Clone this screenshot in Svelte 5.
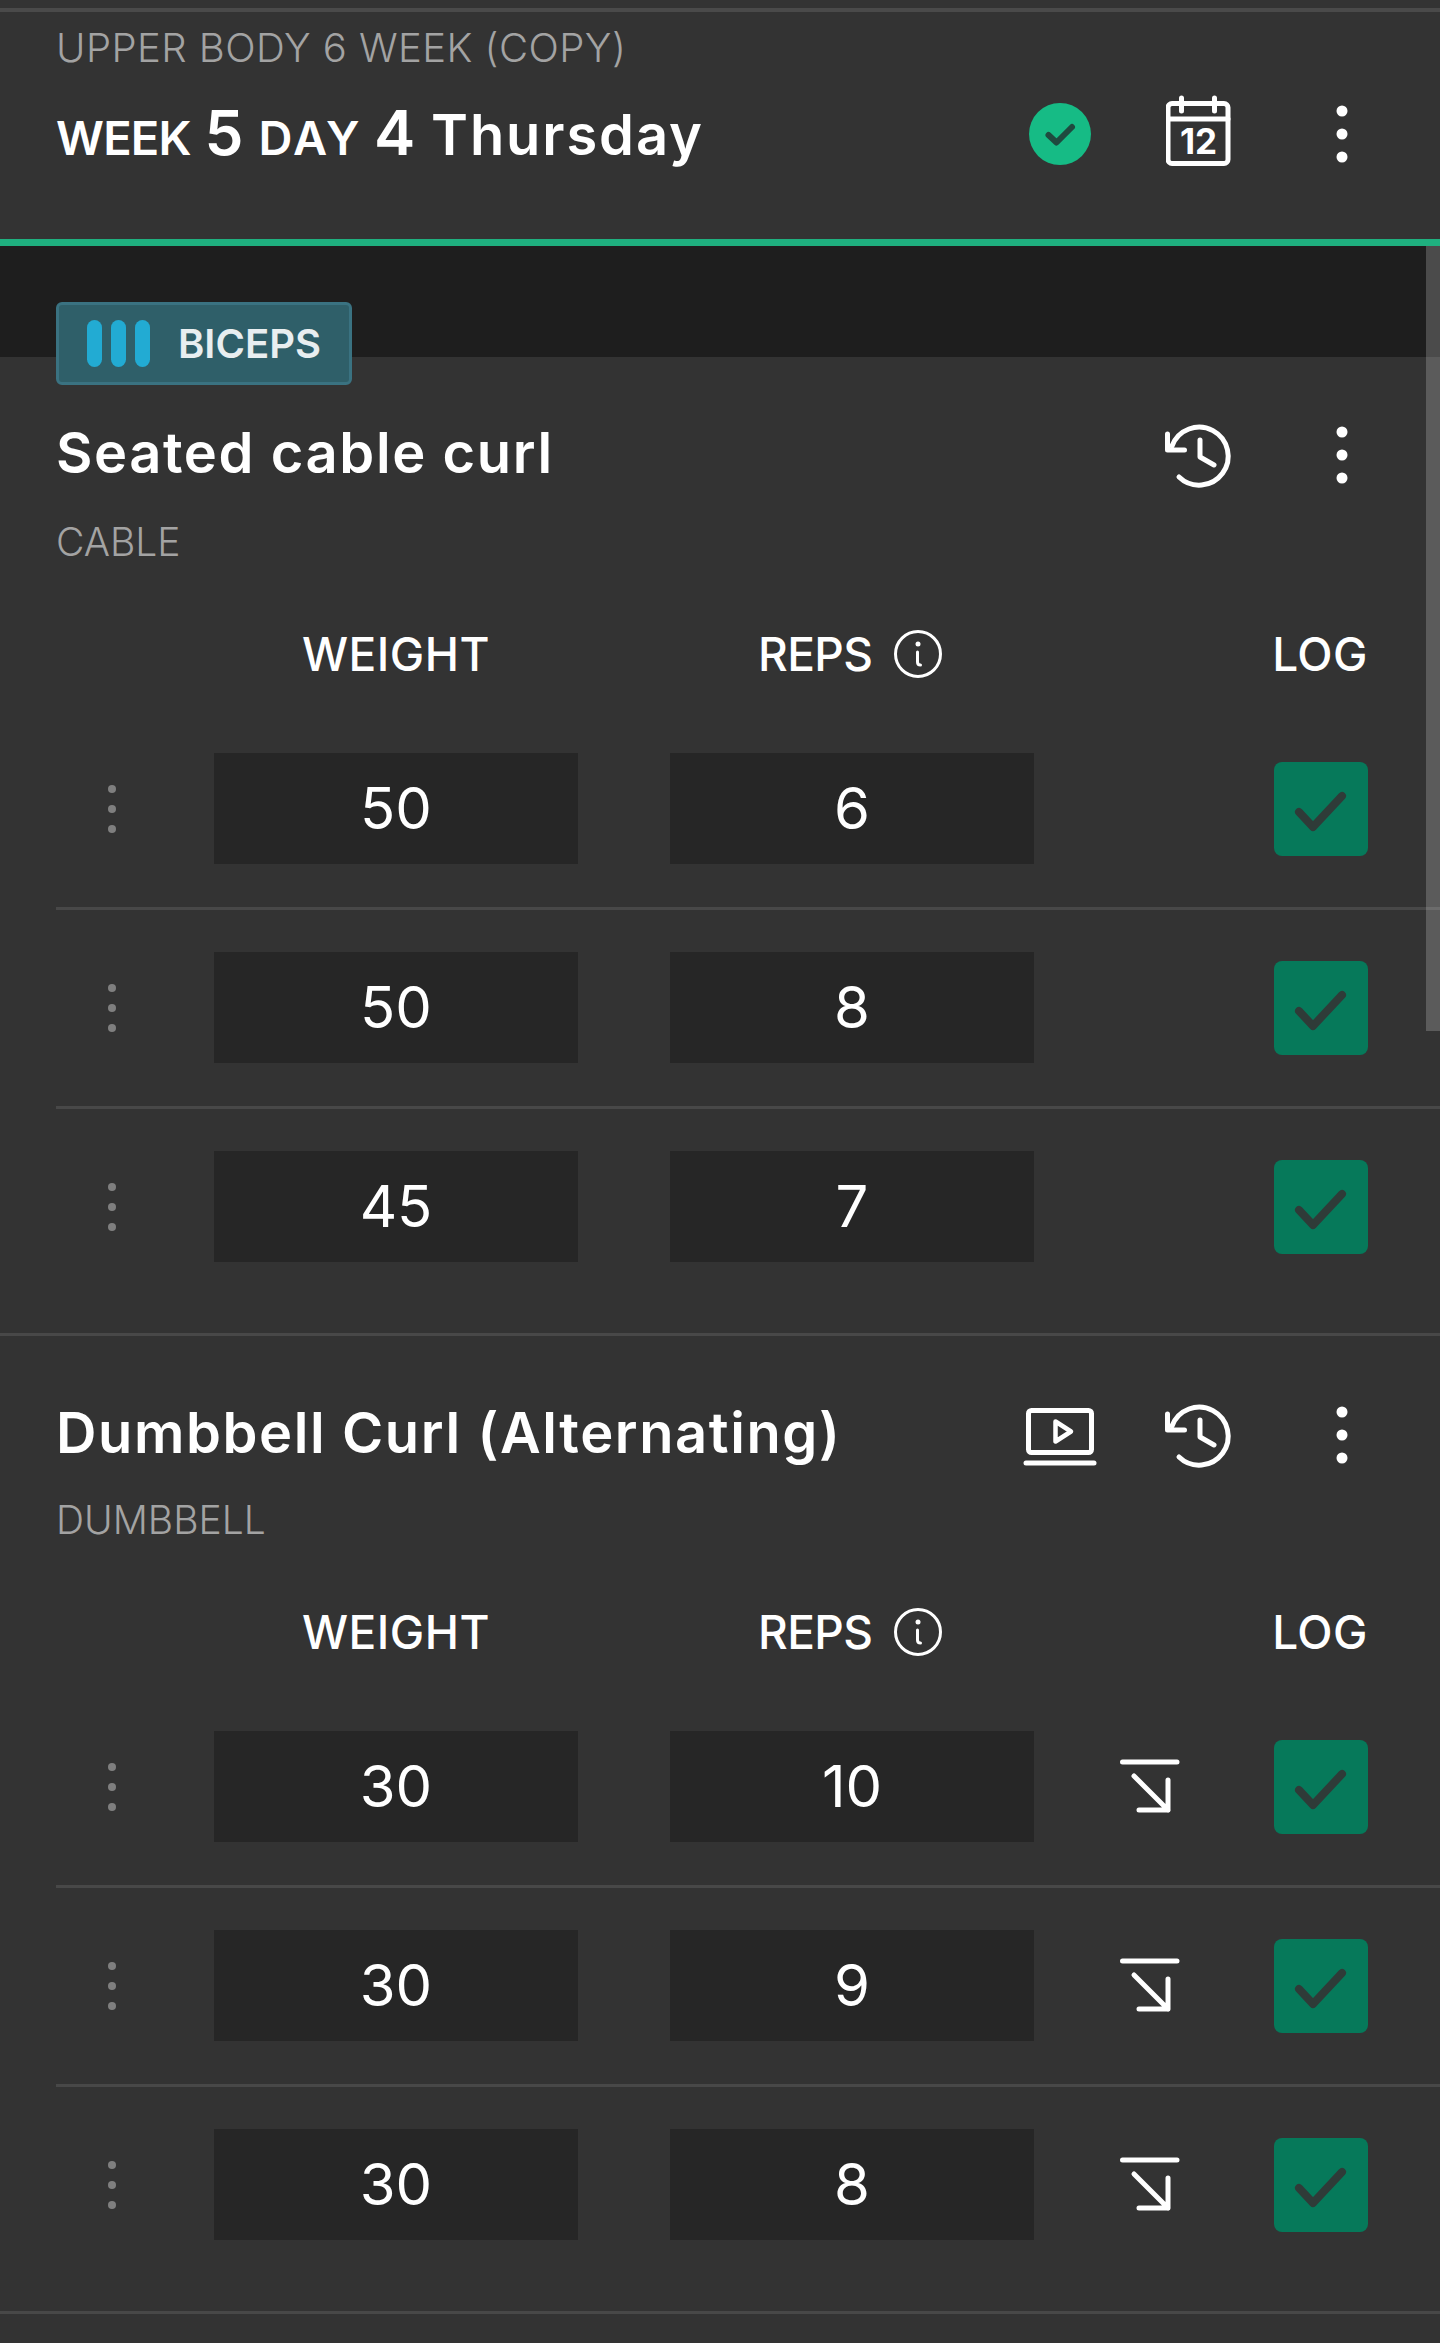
<script lang="ts">
  const exercises = [
    {
      name: 'Seated cable curl',
      kind: 'CABLE',
      video: false,
      rows: [
        { weight: 50, reps: 6, drop: false },
        { weight: 50, reps: 8, drop: false },
        { weight: 45, reps: 7, drop: false },
      ],
    },
    {
      name: 'Dumbbell Curl (Alternating)',
      kind: 'DUMBBELL',
      video: true,
      rows: [
        { weight: 30, reps: 10, drop: true },
        { weight: 30, reps: 9, drop: true },
        { weight: 30, reps: 8, drop: true },
      ],
    },
  ];
</script>

{#snippet kebab()}
  <svg class="icon" width="22" height="68" viewBox="0 0 22 68" aria-hidden="true">
    <circle cx="11" cy="11" r="5.5" /><circle cx="11" cy="34" r="5.5" /><circle cx="11" cy="57" r="5.5" />
  </svg>
{/snippet}

<div class="page">
  <header class="head">
    <p class="program">UPPER BODY 6 WEEK (COPY)</p>
    <div class="title-row">
      <h1 class="day"><span class="week">WEEK</span> <b>5</b> <span class="dayw">DAY</span> <b>4</b> <em>Thursday</em></h1>
      <div class="actions">
        <div class="cell">
          <svg width="62" height="62" viewBox="0 0 62 62" aria-hidden="true">
            <circle class="done" cx="31" cy="31" r="31" />
            <path class="done-tick" d="M19.5 32 L27.5 39.5 L43 24" />
          </svg>
        </div>
        <div class="cell">
          <svg class="line" width="70" height="80" viewBox="0 0 70 80" aria-hidden="true">
            <rect x="2" y="9.500" width="60" height="60" rx="4" />
            <path d="M2 25 H62 M15.500 4 V17 M48.500 4 V17" />
            <text class="cal-num" x="32.500" y="60">12</text>
          </svg>
        </div>
        <div class="cell">{@render kebab()}</div>
      </div>
    </div>
  </header>

  <div class="band">
    <div class="badge">
      <span class="bars"><i></i><i></i><i></i></span>
      BICEPS
    </div>
  </div>

  {#each exercises as ex, i}
    <section class="exercise" class:first={i === 0}>
      <div class="title-row ex-title">
        <h2>{ex.name}</h2>
        <div class="actions">
          <div class="cell">
            {#if ex.video}
              <svg class="line" width="78" height="66" viewBox="0 0 78 66" aria-hidden="true">
                <rect x="7.500" y="8.500" width="63" height="42" rx="3" />
                <path d="M5 61 H73" />
                <path class="thin" d="M34.500 19.500 L50 29.500 L34.500 39.500 Z" />
              </svg>
            {/if}
          </div>
          <div class="cell">
            <svg class="line" width="78" height="70" viewBox="0 -2 78 70" aria-hidden="true">
              <path d="M5.500 12 V28 H22.500" />
              <path d="M10 24 A29 29 0 1 1 17 55" />
              <path d="M38 18 V35 L52 43" />
            </svg>
          </div>
          <div class="cell">{@render kebab()}</div>
        </div>
      </div>
      <p class="kind">{ex.kind}</p>

      <div class="labels">
        <span class="label">WEIGHT</span>
        <span class="label reps-label">
          REPS
          <svg class="info" width="50" height="50" viewBox="0 0 50 50" aria-hidden="true">
            <circle cx="25" cy="25" r="22.500" />
            <circle class="info-dot" cx="25" cy="15" r="2.500" />
            <path d="M24.500 23 V33 Q24.500 36 27.500 36" />
          </svg>
        </span>
        <span class="label log-label">LOG</span>
      </div>

      {#each ex.rows as row}
        <div class="row">
          <div class="handle"><i></i><i></i><i></i></div>
          <div class="field">{row.weight}</div>
          <div class="field">{row.reps}</div>
          {#if row.drop}
            <svg class="line drop" width="60" height="60" viewBox="0 0 60 60" aria-hidden="true">
              <path d="M2.500 5 H57 M14 19 L48 53 M48 23 V53 H19" />
            </svg>
          {/if}
          <div class="log">
            <svg width="94" height="94" viewBox="0 0 94 94" aria-hidden="true">
              <path d="M25 50 L39 65 L68 34" />
            </svg>
          </div>
        </div>
      {/each}
    </section>
  {/each}

  <div class="scrollbar"></div>
</div>

<style>
  :global(body) { margin: 0; background: #333; }
  .page {
    position: relative; height: 2343px; background: #333; color: #fff; padding-top: 8px; box-sizing: border-box;
    font-family: Inter, "Liberation Sans", sans-serif; overflow: hidden;
  }
  p, h1, h2 { margin: 0; font-weight: normal; }

  .head { border-top: 4px solid #4a4a4a; border-bottom: 7px solid #1fb07f; padding-top: 11px; height: 238px; box-sizing: border-box; }
  .program { padding-left: 56px; font-size: 40px; line-height: 50px; font-weight: 300; color: #a3a3a3; letter-spacing: 0.45px; }
  .title-row { display: flex; align-items: center; justify-content: space-between; padding: 0 28px 0 56px; height: 90px; }
  .head .title-row { margin-top: 16px; }
  .day { font-size: 47px; line-height: 90px; font-weight: 600; white-space: nowrap; padding-top: 2px; }
  .day b { font-size: 62px; font-weight: 600; }
  .day em { font-style: normal; font-size: 56px; letter-spacing: 1.9px; margin-left: 4px; }
  .week { letter-spacing: -0.8px; margin-right: 2px; }
  .dayw { letter-spacing: 2.5px; margin-left: 3px; }

  .actions { display: flex; }
  .ex-title .actions { margin-top: 4px; }
  .cell { width: 141px; display: flex; justify-content: center; align-items: center; }
  .icon { fill: #fff; }
  .line { fill: none; stroke: #fff; stroke-width: 5; stroke-linecap: round; stroke-linejoin: round; }
  .thin { stroke-width: 4.500; }
  .done { fill: #16bb85; }
  .done-tick { fill: none; stroke: #1f4a3f; stroke-width: 6; stroke-linecap: round; stroke-linejoin: round; }
  .cal-num { fill: #fff; stroke: none; font-size: 35px; font-weight: 700; text-anchor: middle; }

  .band { height: 111px; background: #1e1e1e; padding: 56px 0 0 56px; box-sizing: border-box; }
  .badge {
    position: relative; z-index: 1; width: 296px; height: 83px; box-sizing: border-box;
    display: flex; align-items: center; background: #2f5f69; border: 3px solid #3a7281; border-radius: 6px;
    padding-left: 28px; font-size: 40px; font-weight: 600; color: #e8eef0;
  }
  .bars { display: flex; gap: 9px; margin-right: 28px; }
  .bars i { width: 15px; height: 47px; border-radius: 8px; background: #22abd3; }

  .exercise { padding-top: 62px; border-top: 3px solid #484848; }
  .exercise.first { padding-top: 61px; border-top: 0; }
  .exercise:last-of-type { border-bottom: 3px solid #484848; }
  h2 { font-size: 56px; line-height: 70px; font-weight: 600; white-space: nowrap; letter-spacing: 1.6px; }
  .ex-title { height: 70px; }
  .kind { padding-left: 56px; margin-top: 27px; font-size: 39px; line-height: 50px; font-weight: 300; color: #a3a3a3; }
  .first .kind { margin-top: 29px; }

  .labels { display: flex; align-items: center; height: 60px; margin: 57px 72px 27px 214px; }
  .label { font-size: 46px; font-weight: 500; letter-spacing: 0.5px; }
  .labels .label:first-child { width: 364px; text-align: center; }
  .reps-label { display: flex; align-items: center; gap: 21px; width: 364px; margin-left: 92px; padding-left: 88px; box-sizing: border-box; letter-spacing: -0.6px; }
  .log-label { margin-left: auto; }
  .info { fill: none; stroke: #fff; stroke-width: 3; stroke-linecap: round; }
  .info-dot { fill: #fff; stroke: none; }

  .row { display: flex; align-items: center; margin-left: 56px; padding: 42px 72px 43px 0; border-bottom: 3px solid #484848; }
  .row:last-child { border-bottom: 0; padding-bottom: 71px; }
  .handle { width: 158px; display: flex; flex-direction: column; gap: 12px; padding-left: 52px; box-sizing: border-box; }
  .handle i { width: 8px; height: 8px; border-radius: 50%; background: #7f7f7f; }
  .field {
    width: 364px; height: 111px; background: #262626; display: flex; align-items: center; justify-content: center;
    font-size: 58px; font-weight: 400; padding-bottom: 2px; box-sizing: border-box;
  }
  .field + .field { margin-left: 92px; }
  .drop { margin-left: 86px; }
  .log { margin-left: auto; width: 94px; height: 94px; border-radius: 8px; background: #06795a; }
  .log svg { display: block; fill: none; stroke: #2f3b38; stroke-width: 8; stroke-linecap: round; stroke-linejoin: round; }

  .scrollbar { position: absolute; right: 0; top: 246px; width: 14px; height: 785px; background: rgba(255, 255, 255, 0.2); }
</style>
